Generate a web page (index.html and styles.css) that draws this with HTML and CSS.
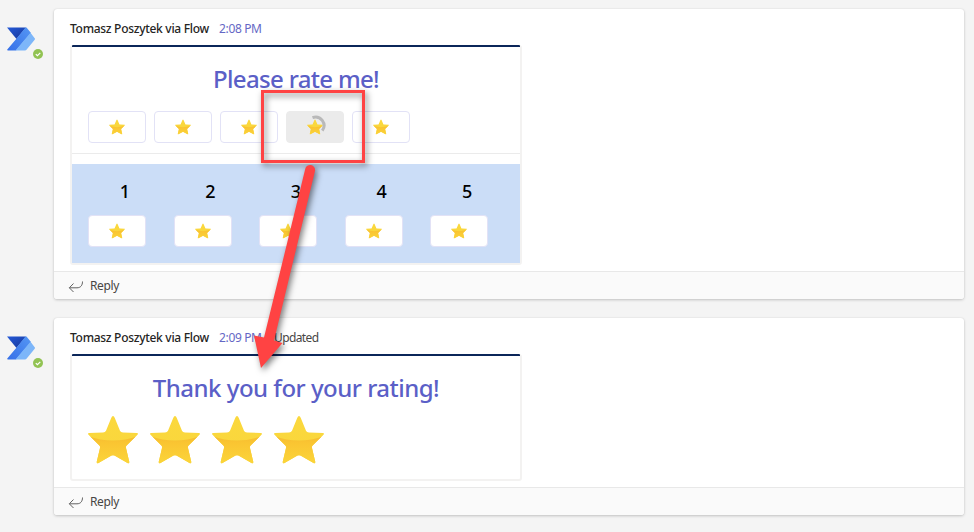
FILE: index.html
```html
<!DOCTYPE html>
<html lang="en">
<head>
<meta charset="utf-8">
<title>Flow ratings</title>
<link rel="stylesheet" href="styles.css">
</head>
<body>
<svg class="defs" width="0" height="0" aria-hidden="true">
  <defs>
    <linearGradient id="gold" x1="0" y1="0" x2="0" y2="1">
      <stop offset="0" stop-color="#fbd83d"/><stop offset="1" stop-color="#f8d63c"/>
    </linearGradient>
    <linearGradient id="amber" x1="0" y1="0" x2="0" y2="1">
      <stop offset="0" stop-color="#f5bb30"/><stop offset="0.25" stop-color="#fac532"/><stop offset="1" stop-color="#fbd53a"/>
    </linearGradient>
    <linearGradient id="navy" x1="0" y1="0" x2="1" y2="1">
      <stop offset="0" stop-color="#2459d8"/><stop offset="1" stop-color="#163697"/>
    </linearGradient>
    <linearGradient id="blue" x1="1" y1="0" x2="0" y2="1">
      <stop offset="0" stop-color="#5597f4"/><stop offset="1" stop-color="#3670e8"/>
    </linearGradient>
    <clipPath id="starclip"><path d="M25 0Q26 0 26.8 2L32 14.8Q32.7 16.5 35 16.5L49 17Q50.6 17.3 49.5 18.7L38.6 29.5Q37.6 30.6 38 32L41.3 46Q41.3 47.8 39.5 47L26.5 39.5Q25 38.8 23.5 39.5L10.5 47Q8.7 47.8 8.7 46L12 32Q12.4 30.6 11.4 29.5L.5 18.7Q-.6 17.3 1 17L15 16.5Q17.3 16.5 18 14.8L23.2 2Q24 0 25 0Z"/></clipPath>
    <symbol id="star" viewBox="0 0 50 48">
      <g clip-path="url(#starclip)">
        <rect width="50" height="48" fill="url(#gold)"/>
        <path d="M0 20Q25 29 50 20V48H0Z" fill="url(#amber)"/>
      </g>
    </symbol>
    <symbol id="flow" viewBox="0 0 28 24">
      <path d="M0 .5H19L9.5 12Z" fill="url(#navy)"/>
      <path d="M18.5 .5H19.5L24 6 9 23.5H1Q-.5 23.5 .7 22L9.2 12Z" fill="url(#blue)"/>
      <path d="M23.5 5.8L27.7 11.3Q28.3 12 27.7 12.7L19.5 22.8Q19 23.5 18 23.5H8.5Z" fill="#7db6f9"/>
    </symbol>
    <symbol id="reply" viewBox="0 0 16 12">
      <path d="M14.5 .5C14.5 4.5 12.5 6.8 9 6.8H1.5M5.5 2.5L1.3 6.8 5.5 11" fill="none" stroke="#616161" stroke-width="1"/>
    </symbol>
    <symbol id="check" viewBox="0 0 10 10">
      <circle cx="5" cy="5" r="5" fill="#92c353"/>
      <path d="M2.8 5.1L4.4 6.7 7.3 3.8" fill="none" stroke="#fff" stroke-width="1.2"/>
    </symbol>
  </defs>
</svg>
<main class="feed">
  <article class="post">
    <div class="avatar"><svg class="logo"><use href="#flow"/></svg><svg class="status"><use href="#check"/></svg></div>
    <div class="bubble">
      <div class="content">
        <header class="meta"><span class="author">Tomasz Poszytek via Flow</span><span class="time">2:08 PM</span></header>
        <section class="card rate">
          <h2 class="title ask">Please rate me!</h2>
          <div class="buttons">
            <button class="star-btn"><svg><use href="#star"/></svg></button>
            <button class="star-btn"><svg><use href="#star"/></svg></button>
            <button class="star-btn"><svg><use href="#star"/></svg></button>
            <button class="star-btn loading"><svg><use href="#star"/></svg><svg class="spinner" viewBox="0 0 22 22"><path d="M8.5 3.6A8.5 8.5 0 0 1 18.3 16.6" fill="none" stroke="#b9b9b9" stroke-width="3"/></svg></button>
            <button class="star-btn"><svg><use href="#star"/></svg></button>
          </div>
          <div class="scale">
            <div class="column"><span class="number">1</span><button class="star-btn"><svg><use href="#star"/></svg></button></div>
            <div class="column"><span class="number">2</span><button class="star-btn"><svg><use href="#star"/></svg></button></div>
            <div class="column"><span class="number">3</span><button class="star-btn"><svg><use href="#star"/></svg></button></div>
            <div class="column"><span class="number">4</span><button class="star-btn"><svg><use href="#star"/></svg></button></div>
            <div class="column"><span class="number">5</span><button class="star-btn"><svg><use href="#star"/></svg></button></div>
          </div>
        </section>
      </div>
      <footer class="reply"><svg><use href="#reply"/></svg><span>Reply</span></footer>
    </div>
  </article>
  <article class="post">
    <div class="avatar"><svg class="logo"><use href="#flow"/></svg><svg class="status"><use href="#check"/></svg></div>
    <div class="bubble">
      <div class="content">
        <header class="meta"><span class="author">Tomasz Poszytek via Flow</span><span class="time">2:09 PM</span><span class="updated">Updated</span></header>
        <section class="card thanks">
          <h2 class="title thank">Thank you for your rating!</h2>
          <div class="result">
            <svg><use href="#star"/></svg><svg><use href="#star"/></svg><svg><use href="#star"/></svg><svg><use href="#star"/></svg>
          </div>
        </section>
      </div>
      <footer class="reply"><svg><use href="#reply"/></svg><span>Reply</span></footer>
    </div>
  </article>
</main>
<svg class="annotation" viewBox="0 0 974 532">
  <rect x="262.5" y="91.5" width="101" height="70" fill="none" stroke="#ff4343" stroke-width="3"/>
  <path d="M305.2 169A5 5 0 0 1 315 171L274 340.5 282.5 343 261 368 254 335.5 264 337.5Z" fill="#ff4343"/>
</svg>
</body>
</html>
```
FILE: styles.css
```css
* { box-sizing: border-box; }
body {
  margin: 0;
  height: 532px;
  overflow: hidden;
  background: #f4f4f4;
  color: #252423;
  font-family: "Noto Sans", "Open Sans", sans-serif;
  font-size: 12px;
}
svg { display: block; flex: none; }
.defs { position: absolute; }
.feed { display: flex; flex-direction: column; gap: 19px; padding: 9px 10px 0 7px; }
.post { display: flex; }
.avatar { position: relative; width: 47px; padding-top: 18px; }
.logo { width: 28px; height: 24px; }
.status { position: absolute; left: 26px; top: 40px; width: 10px; height: 10px; }
.bubble {
  flex: 1;
  background: #fff;
  border-radius: 3px;
  box-shadow: 0 1px 3px 0 rgba(0,0,0,.2), 0 0 1px rgba(0,0,0,.15);
}
.content { padding: 10px 16px 6px; }
.meta { display: flex; height: 26px; line-height: 19px; white-space: nowrap; }
.author { width: 149px; font-weight: 500; letter-spacing: -.29px; }
.time { width: 55px; color: #6567c5; letter-spacing: -.35px; }
.updated { color: #484644; letter-spacing: -.6px; }
.card {
  position: relative;
  width: 452px;
  border: 2px solid #f3f2f1;
  border-radius: 3px;
}
.card::before { content: ""; position: absolute; left: 0; right: 0; top: -2px; height: 2px; background: #0b2659; border-radius: 1px 1px 0 0; }
.rate { height: 220px; }
.thanks { height: 127px; }
.title {
  margin: 0;
  padding-top: 16px;
  height: 64px;
  line-height: 32px;
  font-size: 24px;
  font-weight: 500;
  text-align: center;
  white-space: nowrap;
  color: #5b5fc7;
}
.ask { letter-spacing: -.67px; }
.thank { letter-spacing: -.51px; }
.buttons { display: flex; gap: 8px; height: 43px; padding: 0 16px; border-bottom: 1px solid #ebebeb; }
.star-btn {
  position: relative;
  display: flex;
  align-items: center;
  justify-content: center;
  width: 58px;
  height: 32px;
  padding: 0;
  border: 1px solid #e2e2f6;
  border-radius: 4px;
  background: #fff;
}
.star-btn svg { width: 16px; height: 16px; }
.star-btn.loading { background: #ebebeb; border-color: #ebebeb; }
.star-btn .spinner { position: absolute; left: 17px; top: 2px; width: 22px; height: 22px; }
.scale { display: flex; gap: 12px; height: 99px; margin-top: 10px; padding: 15px 16px 0; background: #cbddf7; }
.column { width: 73.6px; }
.number { display: block; height: 36px; line-height: 25px; text-align: center; font-size: 18px; font-weight: 500; color: #000; }
.reply { display: flex; align-items: center; gap: 6px; height: 28px; padding-left: 14px; border-top: 1px solid #e8e8e8; background: #fafafa; border-radius: 0 0 3px 3px; color: #484644; letter-spacing: -.35px; }
.reply svg { width: 16px; height: 12px; margin-top: 2px; }
.reply span { margin-top: -1px; }
.result { display: flex; gap: 12px; padding: 0 16px; margin-top: -4px; }
.result svg { width: 50px; height: 48px; }
.annotation { position: absolute; left: 0; top: 0; width: 974px; height: 532px; filter: drop-shadow(2px 3px 3px rgba(0,0,0,.5)); pointer-events: none; }
```
